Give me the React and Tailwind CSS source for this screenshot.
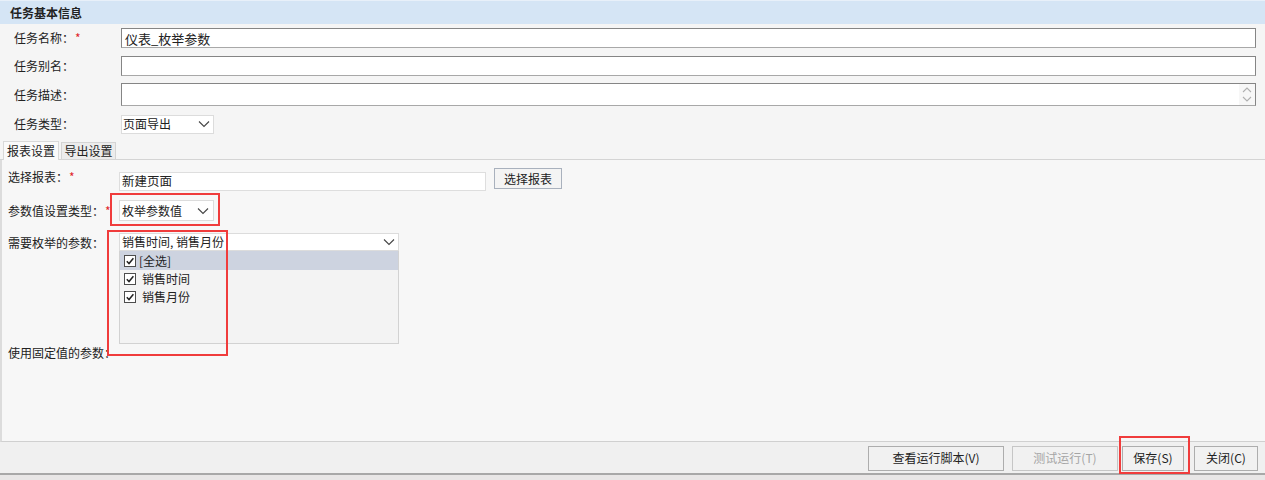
import React from "react";

const Chevron = ({ className = "" }) => (
  <svg width="12" height="8" viewBox="0 0 12 8" className={className}>
    <polyline points="1,1.5 6,6.5 11,1.5" fill="none" stroke="#444" strokeWidth="1.1" />
  </svg>
);

const Check = () => (
  <span className="w-[12px] h-[12px] border border-[#4d4d4d] bg-white flex items-center justify-center shrink-0">
    <svg width="10" height="10" viewBox="0 0 10 10">
      <polyline points="1.8,5.2 4,7.5 8.4,2.2" fill="none" stroke="#222" strokeWidth="1.5" />
    </svg>
  </span>
);

const Star = () => <span className="text-[#e0262a] ml-[1px]">*</span>;

export default function App() {
  return (
    <div
      className="w-[1265px] h-[480px] flex flex-col bg-[#f5f5f5] text-[12px] text-[#222] overflow-hidden relative"
      style={{ fontFamily: '"Noto Sans CJK SC", "Microsoft YaHei", sans-serif' }}
    >
      {/* header */}
      <div className="h-[24px] shrink-0 bg-[#d5e5f5] border-t border-[#e8f0f9] flex items-center pl-[10px] font-bold text-[12px] leading-none">
        任务基本信息
      </div>

      {/* basic info */}
      <div className="flex flex-col pl-[14px] pr-[9px] pt-[4px]">
        <div className="flex items-center h-[20px]">
          <div className="w-[107px] shrink-0 leading-none">
            任务名称：<Star />
          </div>
          <div className="flex-1 h-[20px] bg-white border border-[#858585] border-b-[#a8a8a8] flex items-center pl-[3px] text-[13px] leading-none">
            仪表_枚举参数
          </div>
        </div>
        <div className="flex items-center h-[20px] mt-[8px]">
          <div className="w-[107px] shrink-0 leading-none">任务别名：</div>
          <div className="flex-1 h-[20px] bg-white border border-[#858585] border-b-[#a8a8a8]" />
        </div>
        <div className="flex items-center h-[23px] mt-[7px]">
          <div className="w-[107px] shrink-0 leading-none">任务描述：</div>
          <div className="flex-1 h-[23px] bg-white border border-[#858585] border-b-[#a8a8a8] flex justify-end">
            <div className="w-[16px] h-full bg-[#f7f7f7] flex flex-col items-center justify-center gap-[3px]">
              <svg width="10" height="6" viewBox="0 0 10 6">
                <polyline points="1,5 5,1 9,5" fill="none" stroke="#b0b0b0" strokeWidth="1.1" />
              </svg>
              <svg width="10" height="6" viewBox="0 0 10 6">
                <polyline points="1,1 5,5 9,1" fill="none" stroke="#b0b0b0" strokeWidth="1.1" />
              </svg>
            </div>
          </div>
        </div>
        <div className="flex items-center h-[18px] mt-[9px]">
          <div className="w-[107px] shrink-0 leading-none">任务类型：</div>
          <div className="w-[93px] h-[19px] bg-white border border-[#dcdcdc] flex items-center justify-between pl-[1px] pr-[3px] leading-none">
            <span>页面导出</span>
            <Chevron />
          </div>
        </div>
      </div>

      {/* tabs */}
      <div className="flex items-end h-[19px] mt-[8px] pl-[3px] gap-[2px] border-b border-[#d4d4d4] shrink-0">
        <div className="w-[56px] h-[19px] bg-[#fafafa] border border-b-0 border-[#d9d9d9] flex items-center justify-center leading-none relative top-[1px]">
          报表设置
        </div>
        <div className="w-[55px] h-[17px] bg-[#ececec] border border-b-0 border-[#d4d4d4] flex items-center justify-center leading-none">
          导出设置
        </div>
      </div>

      {/* tab content */}
      <div className="flex-1 bg-[#f7f7f7] border-l-2 border-[#dcdcdc] border-b border-b-[#d0d0d0] pl-[6px] pt-[8px] flex flex-col">
        <div className="flex items-start h-[22px]">
          <div className="w-[111px] shrink-0 leading-none pt-[3px]">
            选择报表：<Star />
          </div>
          <div className="w-[367px] h-[19px] mt-[4px] bg-white border border-[#dedede] flex items-center pl-[2px] text-[12.5px] leading-none">
            新建页面
          </div>
          <div className="ml-[8px] w-[68px] h-[21px] bg-[#f4f4f4] border border-[#a9b1bd] flex items-center justify-center leading-none">
            选择报表
          </div>
        </div>

        <div className="flex items-center h-[21px] mt-[10px]">
          <div className="w-[111px] shrink-0 leading-none">
            参数值设置类型：<Star />
          </div>
          <div className="w-[95px] h-[21px] bg-white border border-[#dcdcdc] flex items-center justify-between pl-[2px] pr-[4px] leading-none">
            <span>枚举参数值</span>
            <Chevron />
          </div>
        </div>

        <div className="flex items-start mt-[12px]">
          <div className="w-[111px] shrink-0 leading-none pt-[4px]">需要枚举的参数：</div>
          <div className="flex flex-col w-[280px]">
            <div className="h-[18px] bg-white border border-[#dcdcdc] flex items-center justify-between pl-[2px] pr-[3px] leading-none">
              <span>销售时间, 销售月份</span>
              <Chevron />
            </div>
            <div className="h-[93px] bg-[#f3f3f3] border border-[#d2d2d2] border-t-0 flex flex-col">
              <div className="h-[19px] bg-[#cdd3e0] flex items-center pl-[4px] gap-[3px] leading-none">
                <Check />
                <span>[全选]</span>
              </div>
              <div className="h-[18px] flex items-center pl-[4px] gap-[6px] leading-none">
                <Check />
                <span>销售时间</span>
              </div>
              <div className="h-[18px] flex items-center pl-[4px] gap-[6px] leading-none">
                <Check />
                <span>销售月份</span>
              </div>
            </div>
          </div>
        </div>

        <div className="leading-none mt-[3px]">使用固定值的参数：</div>
      </div>

      {/* footer */}
      <div className="h-[33px] shrink-0 bg-[#f0f0f0] border-b-2 border-[#a8a8a8] flex items-center justify-end pr-[7px] pt-[1px]">
        <div className="w-[136px] h-[25px] border border-[#adadad] bg-[#f1f1f1] flex items-center justify-center leading-none">
          查看运行脚本(V)
        </div>
        <div className="ml-[8px] w-[106px] h-[25px] border border-[#c6c6c6] bg-[#f1f1f1] flex items-center justify-center leading-none text-[#a5a5a5]">
          测试运行(T)
        </div>
        <div className="ml-[4px] w-[62px] h-[25px] border border-[#adadad] bg-[#f1f1f1] flex items-center justify-center leading-none">
          保存(S)
        </div>
        <div className="ml-[10px] w-[64px] h-[25px] border border-[#adadad] bg-[#f1f1f1] flex items-center justify-center leading-none">
          关闭(C)
        </div>
      </div>
      <div className="h-[5px] shrink-0 bg-[#e8e6e6]" />

      {/* annotation boxes */}
      <div className="absolute left-[110px] top-[193px] w-[110px] h-[33px] border-2 border-[#f03c3c]" />
      <div className="absolute left-[107px] top-[230px] w-[121px] h-[126px] border-2 border-[#f03c3c]" />
      <div className="absolute left-[1119px] top-[436px] w-[71px] h-[38px] border-2 border-[#f03c3c]" />
    </div>
  );
}
